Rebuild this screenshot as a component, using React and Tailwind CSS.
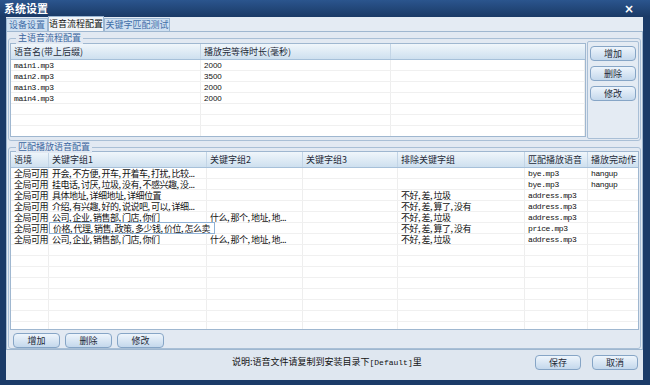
import React from 'react';

const cjk = "font-['Noto_Sans_CJK_SC','Noto_Sans',sans-serif]";
const mono = "font-['Liberation_Mono','Noto_Sans_CJK_SC',monospace]";

const mainRows = [
  ['main1.mp3', '2000'],
  ['main2.mp3', '3500'],
  ['main3.mp3', '2000'],
  ['main4.mp3', '2000'],
];

const matchRows = [
  ['全局可用', '开会, 不方便, 开车, 开着车, 打扰, 比较...', '', '', '', 'bye.mp3', 'hangup'],
  ['全局可用', '挂电话, 讨厌, 垃圾, 没有, 不感兴趣, 没...', '', '', '', 'bye.mp3', 'hangup'],
  ['全局可用', '具体地址, 详细地址, 详细位置', '', '', '不好, 差, 垃圾', 'address.mp3', ''],
  ['全局可用', '介绍, 有兴趣, 好的, 说说吧, 可以, 详细...', '', '', '不好, 差, 算了, 没有', 'address.mp3', ''],
  ['全局可用', '公司, 企业, 销售部, 门店, 你们', '什么, 那个, 地址, 地...', '', '不好, 差, 垃圾', 'address.mp3', ''],
  ['全局可用', '价格, 代理, 销售, 政策, 多少钱, 价位, 怎么卖', '', '', '不好, 差, 算了, 没有', 'price.mp3', ''],
  ['全局可用', '公司, 企业, 销售部, 门店, 你们', '什么, 那个, 地址, 地...', '', '不好, 差, 垃圾', 'address.mp3', ''],
];

const Btn = ({ children, className = '' }) => (
  <button
    className={`h-[15px] rounded-[4px] border border-[#86a5c6] bg-gradient-to-b from-[#eef5fc] to-[#c4d8ec] text-[9px] leading-[13px] text-[#1e2a38] ${cjk} ${className}`}
  >
    {children}
  </button>
);

const HeadCell = ({ w, children, last }) => (
  <div
    className={`${w} shrink-0 h-full flex items-center pl-[3px] text-[9px] leading-[12px] whitespace-nowrap text-[#1e2a38] ${cjk} ${last ? '' : 'border-r border-[#c3d5e6]'}`}
  >
    {children}
  </div>
);

const Cell = ({ w, children, kind = 'cjk', className = '' }) => {
  const font =
    kind === 'mono'
      ? `${mono} text-[8px] tracking-[-0.4px]`
      : kind === 'num'
      ? "font-['Liberation_Sans',sans-serif] text-[8px]"
      : `${cjk} text-[9px] tracking-[-0.5px]`;
  return (
    <div
      className={`${w} shrink-0 h-full flex items-center pl-[3px] leading-[10px] text-[#111] whitespace-nowrap overflow-x-clip border-r border-[#eeeeee] ${font} ${className}`}
    >
      {children != null && children !== '' && <span className="relative top-[1px]">{children}</span>}
    </div>
  );
};

const Legend = ({ children }) => (
  <div className={`absolute left-[7px] -top-[7px] px-[2px] bg-[#e2e9f2] text-[9px] leading-[12px] text-[#3b66a0] ${cjk}`}>
    {children}
  </div>
);

export default function App() {
  const cols2 = ['w-[38px]', 'w-[158px]', 'w-[96px]', 'w-[95px]', 'w-[127px]', 'w-[63px]', 'w-[51px]'];
  const heads2 = ['语境', '关键字组1', '关键字组2', '关键字组3', '排除关键字组', '匹配播放语音', '播放完动作'];
  const blanks1 = Array.from({ length: 3 });
  const blanks2 = Array.from({ length: 9 });

  return (
    <div className="w-[650px] h-[385px] bg-[#1b3b68] flex flex-col overflow-hidden">
      {/* title bar */}
      <div className="h-[17px] shrink-0 flex items-center justify-between px-[4px] bg-gradient-to-b from-[#2b558e] to-[#1a3a66]">
        <span className={`text-[11px] font-bold text-white ${cjk}`}>系统设置</span>
        <span className="text-[12px] font-bold text-white mr-[12px] leading-none font-['DejaVu_Sans',sans-serif]">×</span>
      </div>

      <div className="flex-1 ml-[6px] mr-[7px] mb-[5px] bg-[#dfe7f0] flex flex-col">
        {/* tabs */}
        <div className="h-[14px] shrink-0 flex items-end bg-[#e4ebf3]">
          <div className={`h-[13px] w-[42px] border border-b-0 border-[#9bb6d2] bg-[#cfe0f1] text-[9px] leading-[12px] text-[#3f6ea8] text-center whitespace-nowrap ${cjk}`}>设备设置</div>
          <div className={`h-[15px] w-[56px] border border-b-0 border-[#9bb6d2] bg-[#f3f6f9] text-[9px] leading-[14px] text-[#111] text-center whitespace-nowrap ${cjk}`}>语音流程配置</div>
          <div className={`h-[13px] w-[66px] border border-b-0 border-[#9bb6d2] bg-[#cfe0f1] text-[9px] leading-[12px] text-[#3f6ea8] text-center whitespace-nowrap ${cjk}`}>关键字匹配测试</div>
        </div>

        {/* content panel */}
        <div className="h-[319px] shrink-0 border border-[#9fb7d0] bg-[#e2e9f2] flex flex-col px-[1px] pt-[6px]">
          {/* group 1 */}
          <div className="relative h-[103px] shrink-0 border border-[#a9bfd6] rounded-[3px] flex pt-[4px] pl-[1px] pr-[1px]">
            <Legend>主语音流程配置</Legend>
            <div className="w-[576px] h-[94px] border border-[#9fb7d0] bg-white flex flex-col overflow-hidden">
              <div className="h-[16px] shrink-0 flex bg-gradient-to-b from-[#f0f6fb] to-[#cee0ef] border-b border-[#a6c0d9]">
                <HeadCell w="w-[190px]">语音名(带上后缀)</HeadCell>
                <HeadCell w="w-[190px]">播放完等待时长(毫秒)</HeadCell>
                <HeadCell w="flex-1" last />
              </div>
              {mainRows.map((r, i) => (
                <div key={i} className="h-[11px] shrink-0 flex border-b border-[#f0f0f0]">
                  <Cell w="w-[190px]" kind="mono">{r[0]}</Cell>
                  <Cell w="w-[190px]" kind="num">{r[1]}</Cell>
                  <Cell w="flex-1" />
                </div>
              ))}
              {blanks1.map((_, i) => (
                <div key={i} className="h-[11px] shrink-0 flex border-b border-[#f0f0f0]">
                  <Cell w="w-[190px]" />
                  <Cell w="w-[190px]" />
                  <Cell w="flex-1" />
                </div>
              ))}
            </div>
            <div className="flex-1 ml-[1px] -mt-[2px] h-[98px] border border-[#a9bfd6] rounded-[2px] bg-[#e4ebf3] flex flex-col items-center gap-[5px] pt-[4px]">
              <Btn className="w-[46px]">增加</Btn>
              <Btn className="w-[46px]">删除</Btn>
              <Btn className="w-[46px]">修改</Btn>
            </div>
          </div>

          {/* group 2 */}
          <div className="relative mt-[6px] flex-1 border border-[#a9bfd6] rounded-[3px] flex flex-col pt-[3px] pl-[1px] pr-[1px]">
            <Legend>匹配播放语音配置</Legend>
            <div className="h-[179px] shrink-0 border border-[#9fb7d0] bg-white flex flex-col overflow-hidden">
              <div className="h-[16px] shrink-0 flex bg-gradient-to-b from-[#f0f6fb] to-[#cee0ef] border-b border-[#a6c0d9]">
                {heads2.map((h, i) => (
                  <HeadCell key={i} w={cols2[i]}>{h}</HeadCell>
                ))}
                <HeadCell w="flex-1" last />
              </div>
              {matchRows.map((r, i) => (
                <div key={i} className="h-[11px] shrink-0 flex border-b border-[#f0f0f0]">
                  {r.map((c, j) => {
                    const editing = i === 5 && j === 1;
                    if (editing) {
                      return (
                        <div key={j} className={`${cols2[j]} shrink-0 h-full relative border-r border-[#eeeeee]`}>
                          <span className={`absolute left-0 top-[-1px] h-[12px] w-[166px] z-10 bg-white border border-[#8fb2d6] pl-[3px] text-[9px] tracking-[-0.5px] leading-[11px] text-[#111] whitespace-nowrap ${cjk}`}>{c}</span>
                        </div>
                      );
                    }
                    return (
                      <Cell key={j} w={cols2[j]} kind={j === 5 || j === 6 ? 'mono' : 'cjk'}>
                        {c}
                      </Cell>
                    );
                  })}
                  <Cell w="flex-1" />
                </div>
              ))}
              {blanks2.map((_, i) => (
                <div key={i} className="h-[11px] shrink-0 flex border-b border-[#f0f0f0]">
                  {cols2.map((w, j) => (
                    <Cell key={j} w={w} />
                  ))}
                  <Cell w="flex-1" />
                </div>
              ))}
            </div>
            <div className="flex gap-[5px] pl-[3px] pt-[3px]">
              <Btn className="w-[47px]">增加</Btn>
              <Btn className="w-[47px]">删除</Btn>
              <Btn className="w-[47px]">修改</Btn>
            </div>
          </div>
        </div>

        {/* footer */}
        <div className="flex-1 flex items-start pt-[5px] pr-[5px]">
          <span className={`ml-[226px] mt-[1px] text-[9px] leading-[12px] text-[#111] whitespace-nowrap ${cjk}`}>
            说明:语音文件请复制到安装目录下<span className={`${mono} text-[8px]`}>[Default]</span>里
          </span>
          <div className="flex-1" />
          <Btn className="w-[46px]">保存</Btn>
          <Btn className="w-[46px] ml-[11px]">取消</Btn>
        </div>
      </div>
    </div>
  );
}
